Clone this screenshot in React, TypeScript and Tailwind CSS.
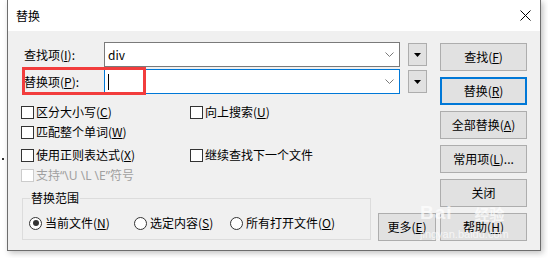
import { ReactNode } from "react";

const fontStack = {
  fontFamily: '"Noto Sans CJK SC", "Noto Sans", sans-serif',
};

const latinFont = { fontFamily: '"Noto Sans", "Liberation Sans", sans-serif' };

function Key({ k }: { k: string }) {
  return <span className="underline underline-offset-[1px]">{k}</span>;
}

function DialogButton({
  children,
  isDefault,
  className = "",
}: {
  children: ReactNode;
  isDefault?: boolean;
  className?: string;
}) {
  return (
    <button
      className={`flex h-[28px] items-center justify-center bg-[#e1e1e1] text-[12px] leading-[16px] text-black ${
        isDefault ? "border-2 border-[#0078d7]" : "border border-[#adadad]"
      } ${className}`}
    >
      {children}
    </button>
  );
}

function ComboRow({
  label,
  focused,
  value,
}: {
  label: ReactNode;
  focused?: boolean;
  value?: string;
}) {
  return (
    <div className="flex h-[25px] items-center">
      <div className="w-[83px] pl-[3px] text-[12px] leading-[16px]">{label}</div>
      <div
        className={`flex h-[25px] w-[296px] items-center justify-between border bg-white pl-[3px] pr-[5px] ${
          focused ? "border-[#0078d7]" : "border-[#7a7a7a]"
        }`}
      >
        {value ? (
          <span className="text-[12px] leading-[16px]">{value}</span>
        ) : (
          <span className="h-[16px] w-[1px] bg-black" />
        )}
        <svg width="9" height="6" viewBox="0 0 9 6">
          <polyline
            points="0.5,0.5 4.5,4.5 8.5,0.5"
            fill="none"
            stroke="#7a7a7a"
            strokeWidth="1"
          />
        </svg>
      </div>
      <div className="ml-[8px] flex h-[23px] w-[19px] items-center justify-center border border-[#adadad] bg-[#e1e1e1]">
        <svg width="7" height="4" viewBox="0 0 7 4">
          <polygon points="0,0 7,0 3.5,4" fill="#000" />
        </svg>
      </div>
    </div>
  );
}

function CheckItem({
  children,
  disabled,
}: {
  children: ReactNode;
  disabled?: boolean;
}) {
  return (
    <div className="flex items-center">
      <span
        className={`h-[13px] w-[13px] border bg-white ${
          disabled ? "border-[#cccccc] bg-[#f7f7f7]" : "border-[#333333]"
        }`}
      />
      <span
        className={`ml-[2px] text-[12px] leading-[16px] ${
          disabled ? "text-[#a0a0a0]" : "text-black"
        }`}
      >
        {children}
      </span>
    </div>
  );
}

function RadioItem({
  children,
  checked,
  width,
}: {
  children: ReactNode;
  checked?: boolean;
  width: string;
}) {
  return (
    <div className={`flex items-center ${width}`}>
      <span className="flex h-[13px] w-[13px] items-center justify-center rounded-full border border-[#333333] bg-white">
        {checked && <span className="h-[6px] w-[6px] rounded-full bg-[#333333]" />}
      </span>
      <span className="ml-[3px] text-[12px] leading-[16px]">{children}</span>
    </div>
  );
}

export default function App() {
  return (
    <div
      className="relative flex h-[258px] w-[548px] overflow-hidden bg-white text-black"
      style={fontStack}
    >
      <span className="absolute left-[2px] top-[158px] h-[2px] w-[2px] bg-[#333]" />

      <div className="ml-[7px] flex h-[251px] w-[534px] flex-col border-x border-b border-[#6d6d6d] shadow-[2px_2px_6px_rgba(0,0,0,0.25)]">
        <div className="flex h-[31px] items-center justify-between bg-white pl-[8px] pr-[9px]">
          <span className="text-[12px] leading-[16px]">替换</span>
          <svg width="11" height="11" viewBox="0 0 11 11">
            <path d="M0.5 0.5 L10.5 10.5 M10.5 0.5 L0.5 10.5" stroke="#000" strokeWidth="1" />
          </svg>
        </div>

        <div className="flex flex-1 bg-[#f0f0f0] pl-[13px] pr-[13px] pt-[11px]">
          <div className="relative flex w-[415px] flex-col">
            <ComboRow
              label={
                <>
                  查找项(<Key k="I" />):
                </>
              }
              value="div"
            />
            <div className="mt-[2px]">
              <ComboRow
                label={
                  <>
                    替换项(<Key k="P" />):
                  </>
                }
                focused
              />
            </div>
            <div className="pointer-events-none absolute left-[1px] top-[25px] h-[28px] w-[124px] border-[3px] border-[#f23d3d]" />

            <div className="mt-[8px] grid h-[20px] grid-cols-[169px_1fr] items-center">
              <CheckItem>
                区分大小写(<Key k="C" />)
              </CheckItem>
              <CheckItem>
                向上搜索(<Key k="U" />)
              </CheckItem>
            </div>
            <div className="grid h-[20px] grid-cols-[169px_1fr] items-center">
              <CheckItem>
                匹配整个单词(<Key k="W" />)
              </CheckItem>
            </div>
            <div className="mt-[3px] grid h-[20px] grid-cols-[169px_1fr] items-center">
              <CheckItem>
                使用正则表达式(<Key k="X" />)
              </CheckItem>
              <CheckItem>继续查找下一个文件</CheckItem>
            </div>
            <div className="grid h-[20px] grid-cols-[169px_1fr] items-center">
              <CheckItem disabled>
                支持<span style={latinFont}>“\U \L \E”</span>符号
              </CheckItem>
            </div>

            <div className="mt-[6px] flex items-start">
              <fieldset className="ml-[1px] h-[49px] w-[349px] border border-[#dcdcdc]">
                <legend className="ml-[7px] px-[1px] text-[12px] leading-[14px]">替换范围</legend>
                <div className="mt-[8px] flex h-[20px] items-center pl-[6px]">
                  <RadioItem checked width="w-[105px]">
                    当前文件(<Key k="N" />)
                  </RadioItem>
                  <RadioItem width="w-[96px]">
                    选定内容(<Key k="S" />)
                  </RadioItem>
                  <RadioItem width="w-[120px]">
                    所有打开文件(<Key k="O" />)
                  </RadioItem>
                </div>
              </fieldset>
              <DialogButton className="ml-[7px] mt-[22px] w-[58px]">
                更多(<Key k="E" />)
              </DialogButton>
            </div>
          </div>

          <div className="ml-auto mt-[1px] flex w-[87px] flex-col gap-[6px]">
            <DialogButton>
              查找(<Key k="F" />)
            </DialogButton>
            <DialogButton isDefault>
              替换(<Key k="R" />)
            </DialogButton>
            <DialogButton>
              全部替换(<Key k="A" />)
            </DialogButton>
            <DialogButton>
              常用项(<Key k="L" />)...
            </DialogButton>
            <DialogButton>关闭</DialogButton>
            <DialogButton>
              帮助(<Key k="H" />)
            </DialogButton>
          </div>
        </div>
      </div>

      <div className="pointer-events-none absolute left-[420px] top-[203px] flex flex-col text-white/70">
        <div className="flex items-end">
          <span className="text-[19px] font-bold leading-[20px] tracking-[1px]" style={{ fontFamily: '"Liberation Sans", sans-serif' }}>
            Bai
          </span>
          <span className="ml-[22px] text-[15px] font-bold leading-[18px]">经验</span>
        </div>
        <span className="mt-[5px] text-[11px] leading-[12px]" style={{ fontFamily: '"Liberation Sans", sans-serif' }}>
          jingyan.baidu.com
        </span>
      </div>
    </div>
  );
}
